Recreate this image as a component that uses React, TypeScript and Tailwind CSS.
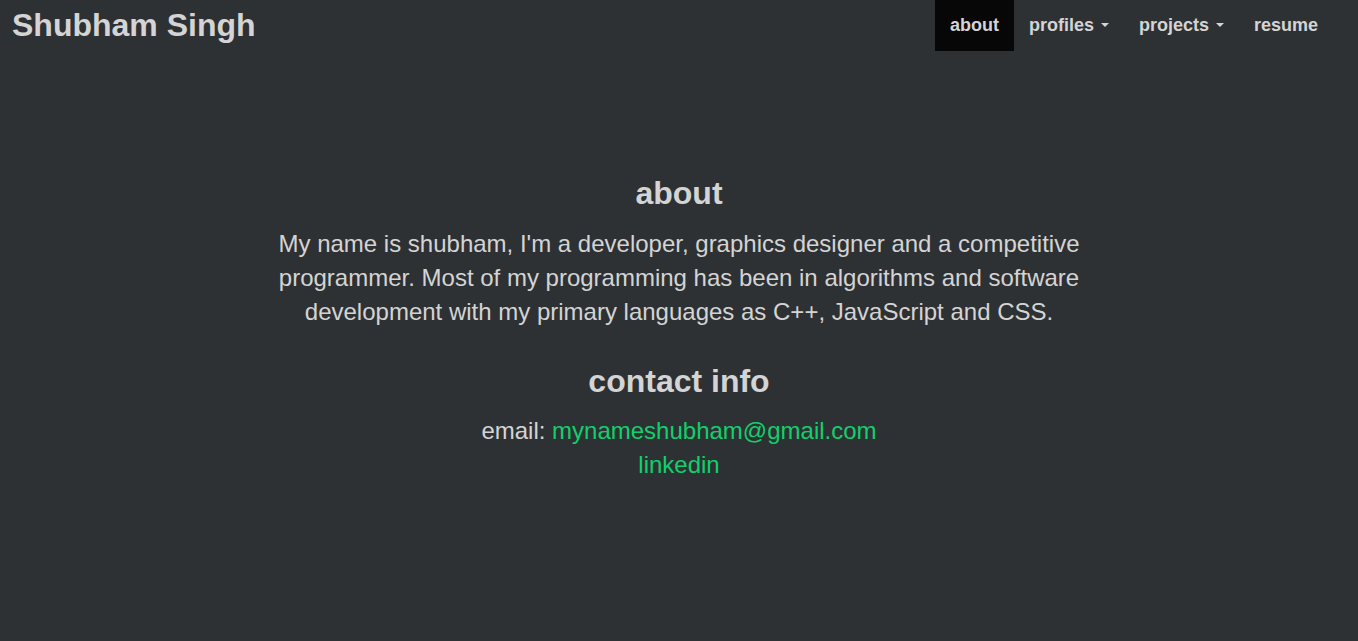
import React from 'react';

const navItems = [
  { label: 'about', active: true, caret: false },
  { label: 'profiles', active: false, caret: true },
  { label: 'projects', active: false, caret: true },
  { label: 'resume', active: false, caret: false },
];

function Caret() {
  return (
    <span className="ml-[7px] inline-block h-0 w-0 border-x-4 border-t-4 border-x-transparent border-t-[#d4d4d4] align-middle" />
  );
}

export default function App() {
  return (
    <div className="min-h-[641px] bg-[#2e3133] font-['Liberation_Sans',Arial,sans-serif] text-[#d4d4d4]">
      {/* Navbar */}
      <nav className="flex h-[51px] items-stretch justify-between pr-[25px]">
        <a href="#" className="flex items-center pb-px pl-3 text-[32px] font-bold leading-[50px]">
          Shubham Singh
        </a>
        <ul className="flex items-stretch">
          {navItems.map((item) => (
            <li key={item.label}>
              <a
                href="#"
                className={`flex h-full items-center px-[15px] pb-px text-[18px] font-bold ${
                  item.active ? 'bg-[#070707]' : ''
                }`}
              >
                {item.label}
                {item.caret && <Caret />}
              </a>
            </li>
          ))}
        </ul>
      </nav>

      {/* Content */}
      <main className="mx-auto flex w-[820px] flex-col items-center pt-[125px] text-center">
        <h2 className="text-[32px] font-bold leading-[35px]">about</h2>
        <p className="mt-[16px] text-[24px] leading-[34px]">
          My name is shubham, I'm a developer, graphics designer and a competitive programmer. Most of my
          programming has been in algorithms and software development with my primary languages as C++,
          JavaScript and CSS.
        </p>
        <h2 className="mt-[35px] text-[32px] font-bold leading-[35px]">contact info</h2>
        <div className="mt-[15px] text-[24px] leading-[34px]">
          <p>
            email: <a href="#" className="text-[#10d06c]">mynameshubham@gmail.com</a>
          </p>
          <p>
            <a href="#" className="text-[#10d06c]">linkedin</a>
          </p>
        </div>
      </main>
    </div>
  );
}
